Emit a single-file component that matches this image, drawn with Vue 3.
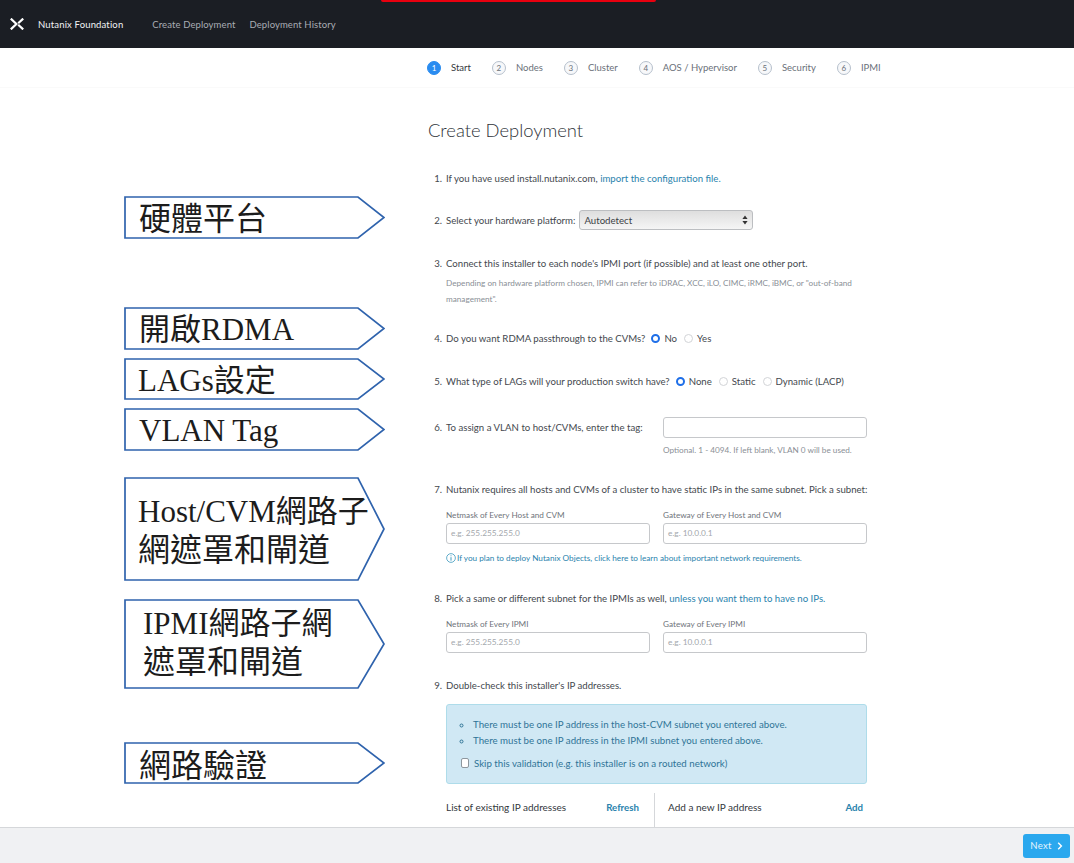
<script setup>
const steps = [
  { n: 1, label: 'Start', active: true },
  { n: 2, label: 'Nodes' },
  { n: 3, label: 'Cluster' },
  { n: 4, label: 'AOS / Hypervisor' },
  { n: 5, label: 'Security' },
  { n: 6, label: 'IPMI' }
]

const W = 261
const NOTCH = 234
const callouts = [
  { top: 196, h: 43, lines: [{ t: '硬體平台', cjk: true }], pad: 15, down: 2 },
  { top: 307, h: 43, lines: [{ t: '開啟RDMA' }], pad: 15, down: 2 },
  { top: 358, h: 42, lines: [{ t: 'LAGs設定' }], pad: 14, down: 4 },
  { top: 408, h: 43, lines: [{ t: 'VLAN Tag' }], pad: 15, down: 2 },
  { top: 477, h: 104, lines: [{ t: 'Host/CVM網路子' }, { t: '網遮罩和閘道', cjk: true }], pad: 14, down: 3 },
  { top: 599, h: 90, lines: [{ t: 'IPMI網路子網' }, { t: '遮罩和閘道', cjk: true }], pad: 19, up: 3 },
  { top: 742, h: 42, lines: [{ t: '網路驗證', cjk: true }], pad: 15, down: 5 }
].map((c) => ({
  ...c,
  points: `1,1 ${NOTCH},1 ${W - 1},${c.h / 2} ${NOTCH},${c.h - 1} 1,${c.h - 1}`
}))
</script>

<template>
  <div class="page">
    <header class="topbar">
      <span class="redbar"></span>
      <svg class="logo" width="14" height="12" viewBox="0 0 14 12">
        <path d="M0.8 0.6L6.4 6L0.8 11.4" fill="none" stroke="#fff" stroke-width="2.2" />
        <path d="M13.2 0.6L8.2 5.2M13.2 11.4L8.2 6.8" fill="none" stroke="#fff" stroke-width="2.2" />
      </svg>
      <span class="brand">Nutanix Foundation</span>
      <nav class="topnav">
        <span>Create Deployment</span>
        <span>Deployment History</span>
      </nav>
    </header>

    <main class="main">
      <ol class="steps">
        <li v-for="s in steps" :key="s.n" class="step" :class="{ active: s.active }">
          <span class="bubble">{{ s.n }}</span>
          <span class="step-label">{{ s.label }}</span>
        </li>
      </ol>

      <div class="form">
        <h1 class="title">Create Deployment</h1>

        <div class="row r1">
          <span class="num">1.</span>
          <span>If you have used install.nutanix.com, <a class="link">import the configuration file.</a></span>
        </div>

        <div class="row r2">
          <span class="num">2.</span>
          <span>Select your hardware platform:</span>
          <div class="select">
            <span>Autodetect</span>
            <svg width="6" height="10" viewBox="0 0 6 10">
              <path d="M3 0.5L5.6 4H0.4Z M3 9.5L0.4 6H5.6Z" fill="#333" />
            </svg>
          </div>
        </div>

        <div class="row r3">
          <span class="num">3.</span>
          <div>
            <div>Connect this installer to each node's IPMI port (if possible) and at least one other port.</div>
            <p class="note">Depending on hardware platform chosen, IPMI can refer to iDRAC, XCC, iLO, CIMC, iRMC, iBMC, or "out-of-band management".</p>
          </div>
        </div>

        <div class="row r4">
          <span class="num">4.</span>
          <span>Do you want RDMA passthrough to the CVMs?</span>
          <span class="radio on"></span><span class="opt">No</span>
          <span class="radio"></span><span class="opt">Yes</span>
        </div>

        <div class="row r5">
          <span class="num">5.</span>
          <span>What type of LAGs will your production switch have?</span>
          <span class="radio on"></span><span class="opt">None</span>
          <span class="radio"></span><span class="opt">Static</span>
          <span class="radio"></span><span class="opt">Dynamic (LACP)</span>
        </div>

        <div class="row r6">
          <span class="num">6.</span>
          <span class="vlan-label">To assign a VLAN to host/CVMs, enter the tag:</span>
          <div class="field">
            <div class="input"></div>
            <p class="hint">Optional. 1 - 4094. If left blank, VLAN 0 will be used.</p>
          </div>
        </div>

        <div class="row r7">
          <span class="num">7.</span>
          <span>Nutanix requires all hosts and CVMs of a cluster to have static IPs in the same subnet. Pick a subnet:</span>
        </div>
        <div class="pair pair7">
          <label class="field">
            <span class="flabel">Netmask of Every Host and CVM</span>
            <div class="input ph">e.g. 255.255.255.0</div>
          </label>
          <label class="field">
            <span class="flabel">Gateway of Every Host and CVM</span>
            <div class="input ph">e.g. 10.0.0.1</div>
          </label>
        </div>
        <div class="objects">
          <svg width="10" height="10" viewBox="0 0 11 11">
            <circle cx="5.5" cy="5.5" r="4.8" fill="none" stroke="#2a8fb8" stroke-width="0.8" />
            <path d="M5.5 4.6V8.4M5.5 2.6V3.6" stroke="#2a8fb8" stroke-width="1" />
          </svg>
          <a class="link">If you plan to deploy Nutanix Objects, click here to learn about important network requirements.</a>
        </div>

        <div class="row r8">
          <span class="num">8.</span>
          <span>Pick a same or different subnet for the IPMIs as well, <a class="link">unless you want them to have no IPs.</a></span>
        </div>
        <div class="pair pair8">
          <label class="field">
            <span class="flabel">Netmask of Every IPMI</span>
            <div class="input ph">e.g. 255.255.255.0</div>
          </label>
          <label class="field">
            <span class="flabel">Gateway of Every IPMI</span>
            <div class="input ph">e.g. 10.0.0.1</div>
          </label>
        </div>

        <div class="row r9">
          <span class="num">9.</span>
          <span>Double-check this installer's IP addresses.</span>
        </div>
        <div class="alert">
          <ul>
            <li>There must be one IP address in the host-CVM subnet you entered above.</li>
            <li>There must be one IP address in the IPMI subnet you entered above.</li>
          </ul>
          <div class="skip">
            <span class="check"></span>
            <span>Skip this validation (e.g. this installer is on a routed network)</span>
          </div>
        </div>
        <div class="lists">
          <div class="list-col left">
            <span class="list-title">List of existing IP addresses</span>
            <a class="action">Refresh</a>
          </div>
          <div class="list-col right">
            <span class="list-title">Add a new IP address</span>
            <a class="action">Add</a>
          </div>
        </div>
      </div>
    </main>

    <footer class="footer">
      <button class="next">
        Next
        <svg width="6" height="8" viewBox="0 0 6 8">
          <path d="M1.2 0.8L4.4 4L1.2 7.2" fill="none" stroke="#fff" stroke-width="1.4" />
        </svg>
      </button>
    </footer>

    <div
      v-for="c in callouts"
      :key="c.top"
      class="callout"
      :style="{ top: c.top + 'px', height: c.h + 'px', paddingLeft: c.pad + 'px', paddingTop: (c.down || 0) + 'px', paddingBottom: (c.up || 0) + 'px' }"
    >
      <svg class="shape" :width="W" :height="c.h" :viewBox="`0 0 ${W} ${c.h}`">
        <polygon :points="c.points" fill="#fff" stroke="#2f63ad" stroke-width="1.7" />
      </svg>
      <span v-for="l in c.lines" :key="l.t" class="callout-line" :class="{ cjk: l.cjk }">{{ l.t }}</span>
    </div>
  </div>
</template>

<style>
html, body { margin: 0; background: #fff; }
</style>

<style scoped>
.page {
  position: relative;
  height: 863px;
  width: 1074px;
  overflow: hidden;
  display: flex;
  flex-direction: column;
  font-family: Lato, "Noto Sans CJK TC", sans-serif;
  font-size: 9.65px;
  color: #44484e;
  background: #fff;
}

/* top bar */
.topbar {
  position: relative;
  flex: 0 0 48px;
  box-sizing: border-box;
  display: flex;
  align-items: center;
  padding-left: 10px;
  background: #1b1e24;
}
.redbar {
  position: absolute;
  left: 381px;
  top: 0;
  width: 275px;
  height: 2px;
  background: #e8000f;
  border-radius: 0 0 2px 2px;
}
.brand {
  margin-left: 14px;
  color: #f2f3f5;
  font-size: 9.5px;
  letter-spacing: 0.15px;
}
.topnav {
  margin-left: 29px;
  display: flex;
  gap: 14px;
  color: #a9adb4;
  font-size: 9.5px;
  letter-spacing: 0.1px;
}

/* main */
.main {
  flex: 1;
  min-height: 0;
  overflow: hidden;
}
.steps {
  list-style: none;
  margin: 0;
  padding: 0 0 0 427px;
  height: 40px;
  display: flex;
  align-items: center;
  border-bottom: 1px solid #fafafa;
  box-sizing: border-box;
}
.step {
  display: flex;
  align-items: center;
  margin-right: 21px;
  color: #6a7079;
  font-size: 9.5px;
}
.bubble {
  box-sizing: border-box;
  width: 14px;
  height: 14px;
  margin-right: 10px;
  border: 1px solid #b6c0cc;
  border-radius: 50%;
  background: #f7f8fa;
  font-size: 8px;
  line-height: 12px;
  text-align: center;
}
.step.active { color: #33373c; }
.step.active .bubble {
  background: #2a8cf0;
  border-color: #2a8cf0;
  color: #fff;
}

.form {
  padding-left: 428px;
  width: 439px;
}
.title {
  margin: 32px 0 0;
  height: 21px;
  font-size: 18.4px;
  line-height: 21px;
  font-weight: 300;
  color: #2e3238;
}
.row {
  display: flex;
  align-items: flex-start;
  line-height: 14px;
  white-space: nowrap;
}
.num {
  flex: 0 0 14px;
  margin-right: 4px;
  text-align: right;
}
.link { color: #2a83ad; }
.r1 { margin-top: 30px; }
.r2 { margin-top: 25px; align-items: center; height: 20px; }
.select {
  box-sizing: border-box;
  display: flex;
  align-items: center;
  justify-content: space-between;
  width: 174px;
  height: 20px;
  margin-left: 4px;
  padding: 0 4px;
  border: 1px solid #bcbec1;
  border-radius: 3px;
  background: linear-gradient(#dedede, #f5f5f5);
  color: #3b3f45;
}
.r3 { margin-top: 26px; white-space: normal; }
.note {
  margin: 5px 0 0;
  width: 412px;
  font-size: 8.2px;
  line-height: 16px;
  color: #8a8f96;
}
.r4 { margin-top: 24px; align-items: center; }
.r5 { margin-top: 29px; align-items: center; }
.radio {
  box-sizing: border-box;
  width: 9px;
  height: 9px;
  margin: 0 4px 0 7px;
  border: 1px solid #d2d4d7;
  border-radius: 50%;
  background: #fff;
}
.radio.on {
  margin-left: 6px;
  border: 2.5px solid #1f6fe8;
}
.r6 { margin-top: 29px; align-items: flex-start; }
.r6 .num { margin-top: 3px; }
.vlan-label { width: 217px; margin-top: 3px; }
.field { display: block; width: 204px; }
.input {
  box-sizing: border-box;
  width: 204px;
  height: 21px;
  border: 1px solid #c6c8cb;
  border-radius: 3px;
  background: #fff;
  padding-left: 4px;
  line-height: 19px;
  font-size: 8.3px;
}
.ph { color: #a3a7ac; }
.hint {
  margin: 7px 0 0;
  line-height: 10px;
  font-size: 8.2px;
  color: #8a8f96;
}
.r7 { margin-top: 27px; }
.flabel {
  display: block;
  height: 9px;
  line-height: 9px;
  margin-bottom: 3px;
  font-size: 8.2px;
  color: #6f747b;
}
.pair {
  display: flex;
  gap: 13px;
  margin-left: 18px;
}
.pair7 { margin-top: 15px; }
.objects {
  display: flex;
  align-items: center;
  gap: 1px;
  margin: 8px 0 0 18px;
  height: 12px;
  font-size: 8.2px;
  white-space: nowrap;
}
.r8 { margin-top: 27px; }
.pair8 { margin-top: 15px; }
.r9 { margin-top: 25px; }
.alert {
  box-sizing: border-box;
  width: 421px;
  height: 80px;
  margin: 12px 0 0 18px;
  padding: 11px 11px 0 11px;
  border: 1px solid #aedcea;
  border-radius: 3px;
  background: #d0e8f4;
  color: #2f7497;
  font-size: 9.7px;
}
.alert ul {
  margin: 0;
  padding: 0 0 0 15px;
  list-style: circle;
  line-height: 16px;
}
.skip {
  display: flex;
  align-items: center;
  gap: 5px;
  margin: 8px 0 0 3px;
  height: 14px;
}
.check {
  box-sizing: border-box;
  width: 8px;
  height: 10px;
  border: 1px solid #8d979e;
  border-radius: 2px;
  background: #fff;
}
.lists {
  display: flex;
  width: 421px;
  height: 34px;
  margin: 9px 0 0 18px;
  color: #33373c;
  font-size: 10px;
}
.list-col {
  box-sizing: border-box;
  display: flex;
  justify-content: space-between;
  align-items: center;
  padding-bottom: 6px;
}
.left { width: 209px; padding-right: 15px; border-right: 1px solid #d5d7da; }
.right { flex: 1; padding: 0 4px 6px 13px; }
.action { color: #2a83ad; font-weight: 700; font-size: 9.7px; }

/* footer */
.footer {
  flex: 0 0 36px;
  box-sizing: border-box;
  display: flex;
  justify-content: flex-end;
  align-items: center;
  padding: 0 4px 0 0;
  border-top: 1px solid #d5d7da;
  background: #f0f1f3;
}
.next {
  display: flex;
  align-items: center;
  justify-content: center;
  gap: 5px;
  width: 47px;
  height: 24px;
  padding: 0;
  border: 0;
  border-radius: 3px;
  background: #2aa8ee;
  color: #e7f5fd;
  font-family: inherit;
  font-size: 9.5px;
  letter-spacing: 0.3px;
}

/* annotation overlays */
.callout {
  position: absolute;
  left: 124px;
  box-sizing: border-box;
  width: 261px;
  display: flex;
  flex-direction: column;
  justify-content: center;
  font-family: "Liberation Serif", "Noto Sans CJK TC", serif;
  font-size: 31px;
  line-height: 38px;
  color: #1c1c1c;
  white-space: nowrap;
}
.shape {
  position: absolute;
  left: 0;
  top: 0;
}
.callout-line { position: relative; }
.callout-line.cjk { font-size: 32px; }
</style>
